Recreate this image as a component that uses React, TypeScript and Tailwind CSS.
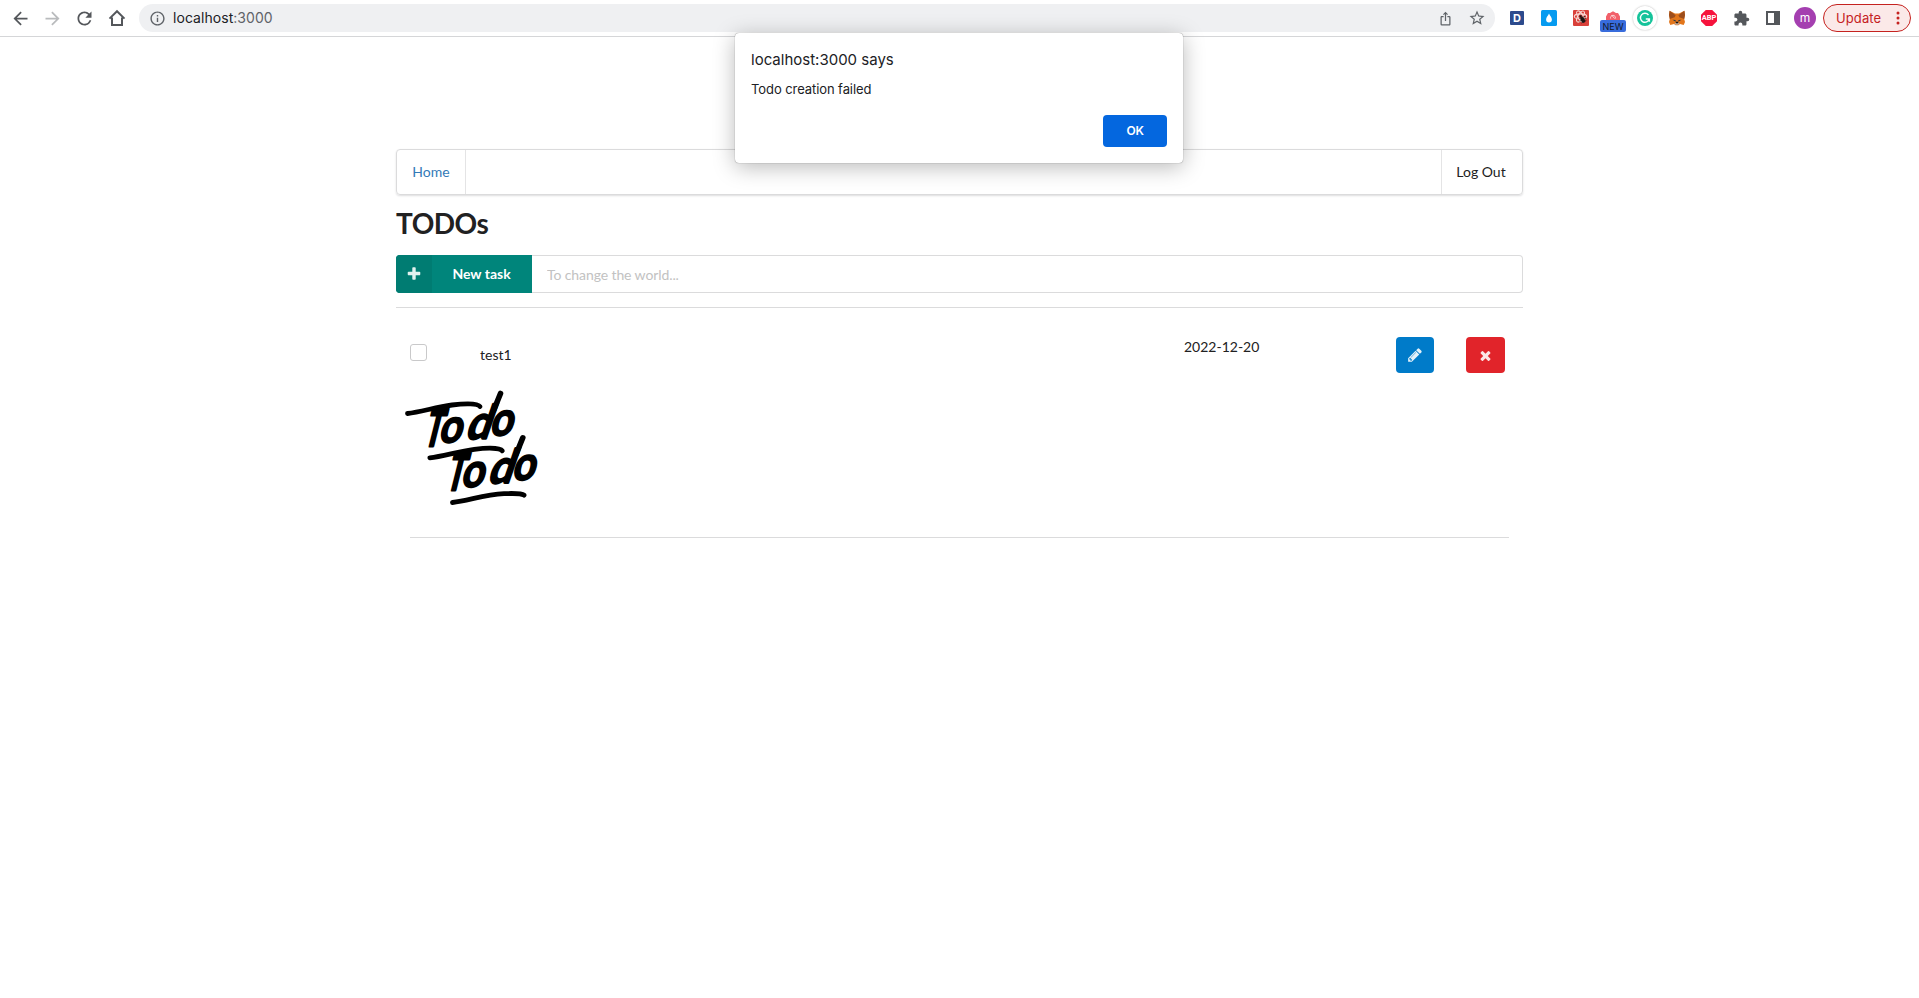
import React from "react";
import { MdArrowBack, MdArrowForward, MdRefresh, MdInfoOutline, MdStarBorder, MdExtension, MdIosShare } from "react-icons/md";

function HomeIcon() {
  return (
    <svg viewBox="0 0 18 18" className="ml-[2px] h-[18px] w-[18px]" fill="none" stroke="#54575b" strokeWidth="2">
      <path d="M1.500 9.600 9 2.200l7.500 7.400M4 8.500V16h10V8.500" />
    </svg>
  );
}

function DropIcon() {
  return (
    <svg viewBox="0 0 16 16" className="h-4 w-4">
      <rect width="16" height="16" rx="1.500" fill="#069bf0" />
      <path d="M8 3.600C9 6 10.900 7.500 10.900 9.600a2.900 2.900 0 0 1-5.800 0C5.100 7.500 7 6 8 3.600Z" fill="#fff" />
    </svg>
  );
}

function BugIcon() {
  return (
    <svg viewBox="0 0 16 16" className="h-4 w-4">
      <rect width="16" height="16" rx="1" fill="#d9403a" />
      <g fill="none" stroke="#f8d9d5" strokeWidth="1.100">
        <ellipse cx="7.500" cy="6.500" rx="6.200" ry="2.600" />
        <ellipse cx="7.500" cy="6.500" rx="6.200" ry="2.600" transform="rotate(60 7.500 6.500)" />
        <ellipse cx="7.500" cy="6.500" rx="6.200" ry="2.600" transform="rotate(120 7.500 6.500)" />
      </g>
      <g fill="#1d1513" stroke="#1d1513" strokeWidth=".3">
        <ellipse cx="9.800" cy="9.800" rx="1.900" ry="3" transform="rotate(-28 9.800 9.800)" />
        <circle cx="7.600" cy="6.300" r="1.100" />
        <path d="m6.300 8.500 6-2.300M6.500 11.300l6.800-3.200M8.300 13l5-2.500" strokeWidth=".7" />
      </g>
    </svg>
  );
}

function NewBadgeIcon() {
  return (
    <span className="relative flex h-7 w-[26px] justify-center">
      <svg viewBox="0 0 16 10" className="mt-[7px] h-[10px] w-4">
        <path d="M3 2 5 2 8 .3 11 2h2l2 3.500V9H1V5.500Z" fill="#f2606a" />
        <path d="M5.600 7.500a2.500 2.500 0 1 1 4.800 0M6.500 4l3.200 3.600" fill="none" stroke="#fbd3d5" strokeWidth="1" />
      </svg>
      <span className="absolute bottom-0 left-0 flex h-3 w-[26px] items-center justify-center rounded-[2px] bg-[#386cdc] text-[9px] leading-none text-[#10182c]">NEW</span>
    </span>
  );
}

function GrammarIcon() {
  return (
    <span className="flex h-6 w-6 items-center justify-center rounded-full bg-white shadow-[0_0_2px_rgba(0,0,0,0.3)]">
      <svg viewBox="0 0 16 16" className="h-4 w-4">
        <circle cx="8" cy="8" r="8" fill="#15c39a" />
        <path d="M11.500 5A4.500 4.500 0 1 0 12.300 9H8.800M12.400 8.500v3.200" fill="none" stroke="#fff" strokeWidth="1.400" />
      </svg>
    </span>
  );
}

function FoxIcon() {
  return (
    <svg viewBox="0 0 16 16" className="h-4 w-4">
      <path d="M.6.8 6 3.600h4L15.400.8 16 5l-.8 4 .8 3-1.300 3-3.700-1-1.600 1.300H6.600L5 14l-3.700 1L0 12l.8-3L0 5Z" fill="#e2761b" />
      <path d="M.6.8 6.600 5.200 5.700 7.200.8 9 0 5ZM15.400.8 9.400 5.200l.9 2L15.200 9 16 5Z" fill="#9c4d1c" />
      <path d="m3.500 9.800 3 .3.300 1.700ZM12.500 9.800l-3 .3-.3 1.700Z" fill="#233447" />
      <path d="M5.500 13.500 7 12.600h2l1.500.9-1.200 1.200H6.700Z" fill="#c0ad9e" />
      <path d="m6.700 12.200.4-.5h1.800l.4.500-.3 1H7Z" fill="#161616" />
    </svg>
  );
}

function AbpIcon() {
  return (
    <span className="flex h-4 w-4 items-center justify-center bg-[#f6133c] font-['Roboto',sans-serif] text-[7.500px] font-bold leading-none text-white [clip-path:polygon(30%_0,70%_0,100%_30%,100%_70%,70%_100%,30%_100%,0_70%,0_30%)]">
      ABP
    </span>
  );
}

function Slot({ children }: { children: React.ReactNode }) {
  return <span className="flex h-7 w-8 shrink-0 items-center justify-center">{children}</span>;
}

function Toolbar() {
  return (
    <header className="flex h-[37px] items-start border-b border-[#d5d6d8] bg-white pt-1 font-['Inter',sans-serif]">
      <div className="flex w-[139px] shrink-0 pl-1 text-[#54575b]">
        <Slot><MdArrowBack size={21} /></Slot>
        <Slot><MdArrowForward size={21} className="text-[#b9bbbd]" /></Slot>
        <Slot><MdRefresh size={21} className="ml-px" /></Slot>
        <Slot><HomeIcon /></Slot>
      </div>
      <div className="flex h-7 w-[1356px] shrink-0 items-center rounded-full bg-[#eff0f2] pl-[10px] pr-0.5 text-[#5f6368]">
        <MdInfoOutline size={17} />
        <span className="ml-[7px] flex-1 text-[14px] leading-5 tracking-[0.05px]">
          <span className="text-[#202124]">localhost</span>:3000
        </span>
        <Slot><MdIosShare size={15} /></Slot>
        <Slot><MdStarBorder size={18} /></Slot>
      </div>
      <div className="ml-[6px] flex shrink-0">
        <Slot>
          <span className="flex h-[14px] w-[14px] items-center justify-center rounded-[1px] bg-[#2c4a8c] text-[11px] font-bold text-white">D</span>
        </Slot>
        <Slot><DropIcon /></Slot>
        <Slot><BugIcon /></Slot>
        <Slot><NewBadgeIcon /></Slot>
        <Slot><GrammarIcon /></Slot>
        <Slot><FoxIcon /></Slot>
        <Slot><AbpIcon /></Slot>
        <Slot><MdExtension size={17} className="text-[#54575b]" /></Slot>
        <Slot>
          <span className="h-[14px] w-[14px] border-2 border-r-[6px] border-[#54575b]" />
        </Slot>
        <Slot>
          <span className="flex h-[22px] w-[22px] items-center justify-center rounded-full bg-[#a43fb0] pb-px text-[12px] text-white">m</span>
        </Slot>
      </div>
      <button className="ml-[2px] flex h-7 w-[88px] shrink-0 items-center rounded-full border border-[#c5221f] bg-[#fbe9e8] pl-[12px] text-[13px] text-[#c5221f]">
        <span className="w-[56px] pt-0.5 text-left tracking-[0.1px]">Update</span>
        <svg viewBox="0 0 4 14" className="ml-1 h-[14px] w-1" fill="#c5221f">
          <circle cx="2" cy="2" r="1.500" />
          <circle cx="2" cy="7" r="1.500" />
          <circle cx="2" cy="12" r="1.500" />
        </svg>
      </button>
    </header>
  );
}

function LogoWord({ x, y }: { x: number; y: number }) {
  return (
    <g transform={`translate(${x} ${y})`}>
      <path d="M11.500 33.500C25 32 40 27 56 25c14-1.800 26-1.500 28 1.500" fill="none" stroke="#000" strokeWidth="4.800" strokeLinecap="round" />
      <path d="M97.800 30 104.500 13.500" stroke="#000" strokeWidth="5.600" strokeLinecap="round" />
      <g
        fontSize="47"
        textAnchor="middle"
        stroke="#000"
        strokeWidth="1.800"
        strokeLinejoin="round"
        className="font-['Lato',sans-serif] font-bold"
      >
        <text transform="translate(35.500 65.500) skewX(-14) scale(.6 1.080)" strokeWidth="3">T</text>
        <text transform="translate(53.500 62.500) rotate(-3) skewX(-16) scale(.86 1)">o</text>
        <text transform="translate(80.500 59) rotate(-2) skewX(-21) scale(.92 1)">d</text>
        <text transform="translate(104.500 55.500) rotate(-3) skewX(-16) scale(.86 1)">o</text>
      </g>
    </g>
  );
}

function TodoLogo() {
  return (
    <svg viewBox="0 0 150 136" className="block h-[136px] w-[150px]" role="img" aria-label="Todo Todo">
      <LogoWord x={0} y={0} />
      <LogoWord x={22.300} y={44.300} />
      <path d="M56.500 122.500C72 121 88 114.500 108 113.700c9-.4 18-.2 20 1.500" fill="none" stroke="#000" strokeWidth="4.800" strokeLinecap="round" />
    </svg>
  );
}

function Alert() {
  return (
    <div
      role="alertdialog"
      className="absolute left-[735px] top-[33px] h-[130px] w-[448px] rounded-[4px] bg-white px-4 pt-[17px] font-['Inter',sans-serif] text-[#202124] shadow-[0_0_1px_rgba(0,0,0,0.6),0_4px_22px_rgba(0,0,0,0.28)]"
    >
      <p className="text-[15px] leading-5">localhost:3000 says</p>
      <p className="mt-[9px] text-[13px] leading-5 tracking-[-0.080px]">Todo creation failed</p>
      <div className="mt-4 flex justify-end">
        <button className="h-8 w-16 rounded-[4px] bg-[#0467df] text-[12px] font-semibold tracking-[-0.3px] text-white">OK</button>
      </div>
    </div>
  );
}

export default function App() {
  return (
    <div className="relative h-[998px] w-[1919px] overflow-hidden bg-white">
      <Toolbar />
      <main className="ml-[396px] mt-[112px] w-[1127px] font-['Lato',sans-serif] text-[14px] leading-5 text-[#212122]">
        <nav className="flex h-[46px] items-stretch justify-between rounded-[4px] border border-[#dbdbdc] shadow-[0_1px_2px_rgba(34,36,38,0.15)]">
          <a className="flex w-[69px] items-center justify-center border-r border-[#e4e4e5] text-[#337ab7]">Home</a>
          <a className="flex w-[81px] items-center justify-center border-l border-[#e4e4e5] pr-0.5">Log Out</a>
        </nav>
        <h1 className="mt-[10px] text-[28px] font-bold leading-9 tracking-[-0.5px]">TODOs</h1>
        <div className="mt-[14px] flex h-[38px]">
          <button className="flex w-[136px] shrink-0 overflow-hidden rounded-l-[4px] bg-[#00857b] font-bold text-white">
            <span className="flex h-full w-9 items-center justify-center bg-[#007c72]">
              <svg viewBox="0 0 1792 1792" className="h-4 w-4" fill="#e1f1ef">
                <path d="M1600 736v192q0 40-28 68t-68 28h-416v416q0 40-28 68t-68 28h-192q-40 0-68-28t-28-68v-416h-416q-40 0-68-28t-28-68v-192q0-40 28-68t68-28h416v-416q0-40 28-68t68-28h192q40 0 68 28t28 68v416h416q40 0 68 28t28 68z" />
              </svg>
            </span>
            <span className="flex h-full flex-1 items-center justify-center pb-px pr-px">New task</span>
          </button>
          <input
            className="min-w-0 flex-1 rounded-r-[4px] border border-l-0 border-[#dbdbdc] pl-[15px] pt-0.5 tracking-[-0.100px] placeholder:text-[#c2c2c2]"
            placeholder="To change the world..."
          />
        </div>
        <hr className="mt-[14px] border-[#dbdbdc]" />
        <section className="mx-[14px]">
          <div className="flex h-[72px] items-start pt-[29px]">
            <span className="mt-[7px] h-[17px] w-[17px] rounded-[3px] border border-[#c9c9ca]" />
            <span className="ml-[53px] mt-2 w-[704px]">test1</span>
            <span className="w-[212px]">2022-12-20</span>
            <button className="flex h-9 w-[38px] items-center justify-center rounded-[4px] bg-[#007bc9]">
              <svg viewBox="0 0 1792 1792" className="h-4 w-4" fill="#e4f1f9">
                <path d="M491 1536l91-91-235-235-91 91v107h128v128h107zm523-928q0-22-22-22-10 0-17 7l-542 542q-7 7-7 17 0 22 22 22 10 0 17-7l542-542q7-7 7-17zm-54-192l416 416-832 832h-416v-416zm683 96q0 53-37 90l-166 166-416-416 166-165q36-38 90-38 53 0 91 38l235 234q37 39 37 91z" />
              </svg>
            </button>
            <button className="ml-8 flex h-9 w-[39px] items-center justify-center rounded-[4px] bg-[#e1242a] pr-px">
              <svg viewBox="0 0 1792 1792" className="h-[15px] w-[15px]" fill="#fbe5e5">
                <path d="M1490 1322q0 40-28 68l-136 136q-28 28-68 28t-68-28l-294-294-294 294q-28 28-68 28t-68-28l-136-136q-28-28-28-68t28-68l294-294-294-294q-28-28-28-68t28-68l136-136q28-28 68-28t68 28l294 294 294-294q28-28 68-28t68 28l136 136q28 28 28 68t-28 68l-294 294 294 294q28 28 28 68z" />
              </svg>
            </button>
          </div>
          <div className="-ml-[14px] h-[157px]">
            <TodoLogo />
          </div>
          <hr className="border-[#dbdbdc]" />
        </section>
      </main>
      <Alert />
    </div>
  );
}
